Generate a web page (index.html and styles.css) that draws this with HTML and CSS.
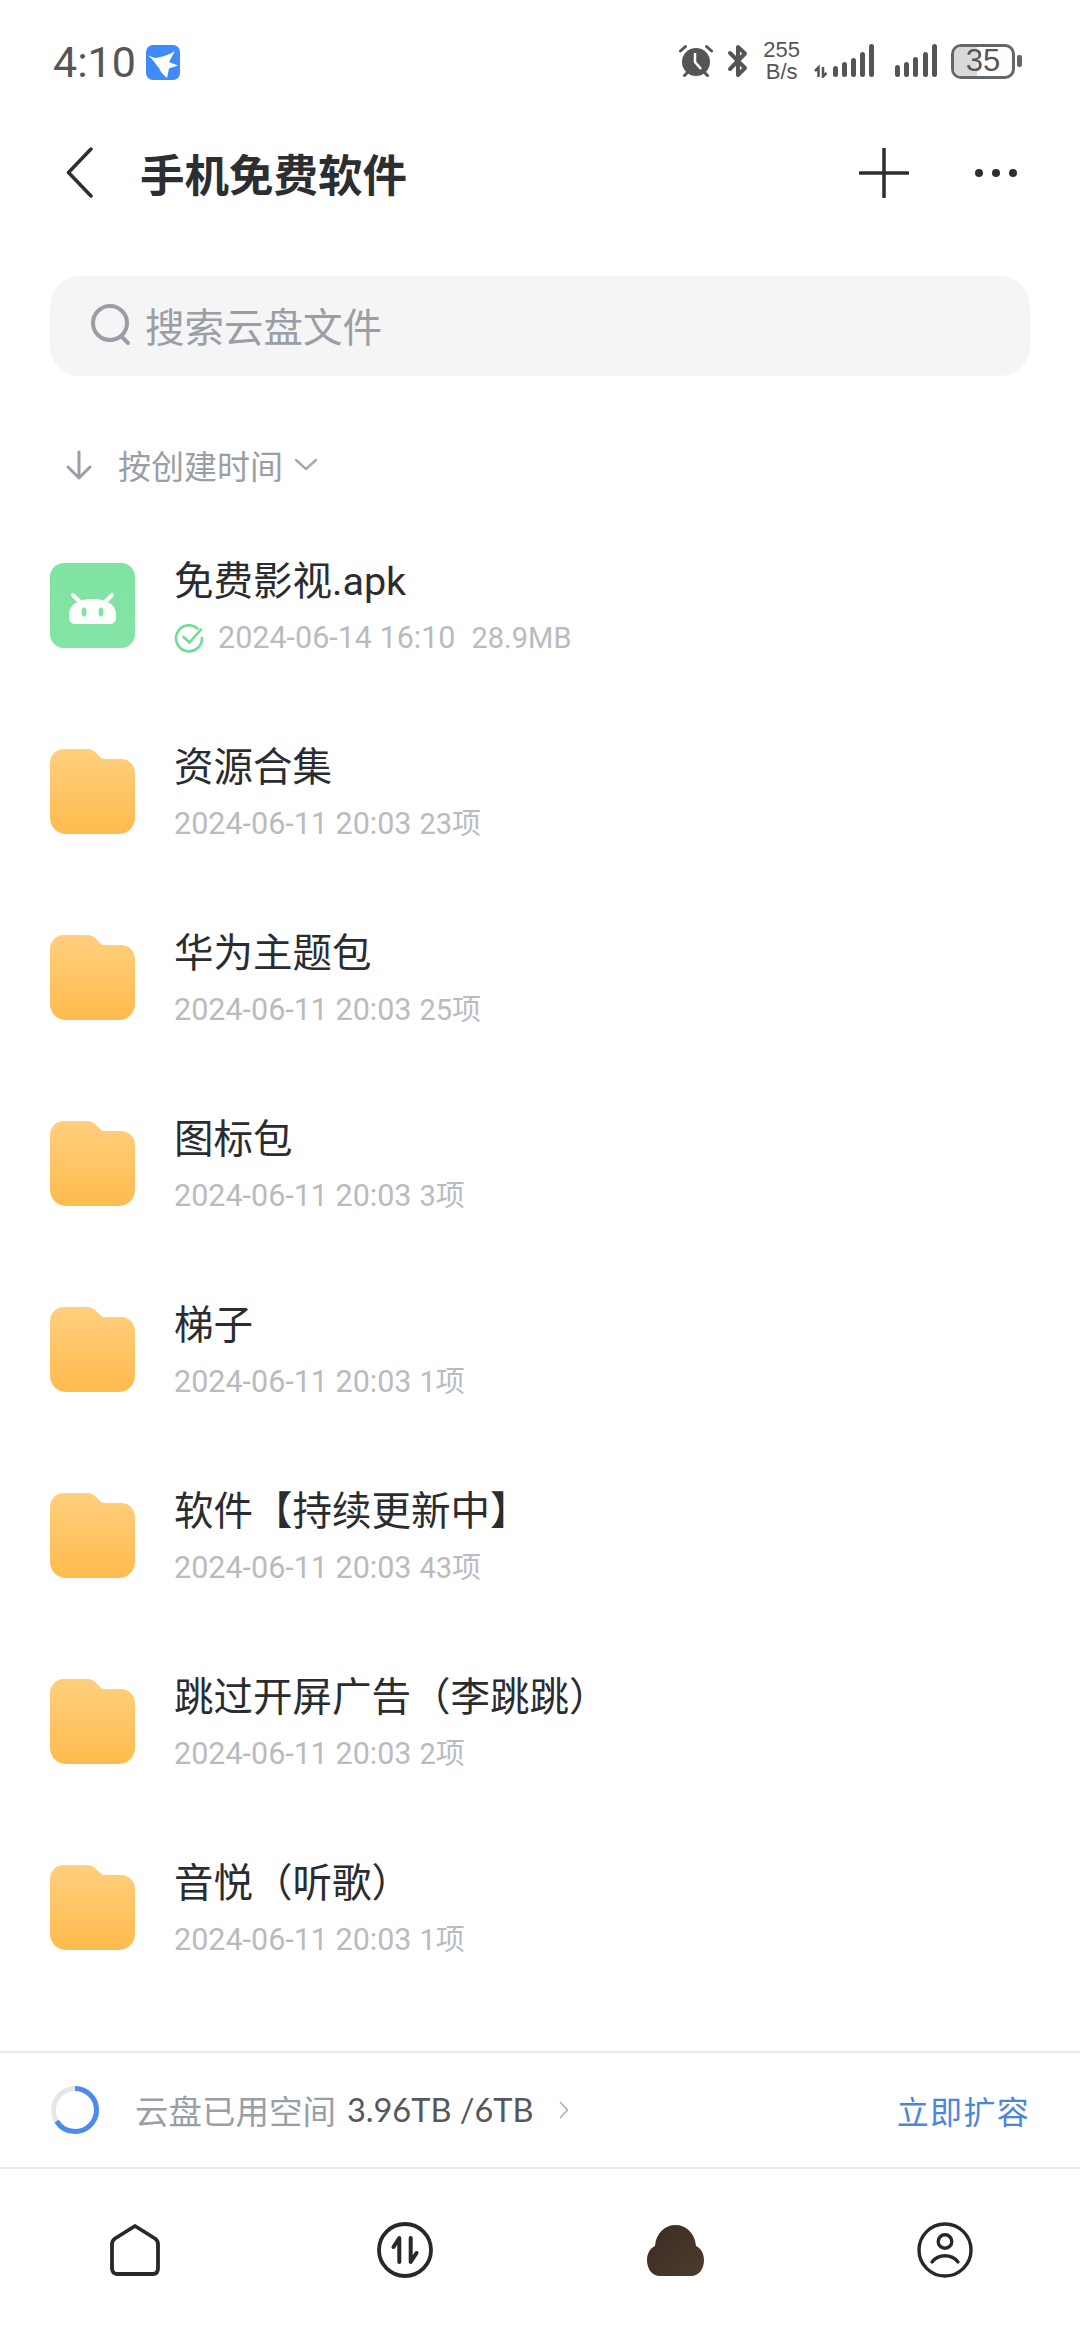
FILE: index.html
```html
<!DOCTYPE html>
<html lang="zh">
<head>
<meta charset="utf-8">
<title>手机免费软件</title>
<link rel="stylesheet" href="styles.css">
</head>
<body>
<div class="app">
  <svg width="0" height="0" class="defs">
    <defs>
      <linearGradient id="fg" x1="0" y1="0" x2="0" y2="1"><stop offset="0" stop-color="#ffcf7e"/><stop offset="1" stop-color="#ffbb4d"/></linearGradient>
      <linearGradient id="ag" x1="0" y1="0" x2="0" y2="1"><stop offset="0" stop-color="#7fe3a1"/><stop offset="1" stop-color="#84e4a5"/></linearGradient>
      <linearGradient id="cg" x1="0" y1="0" x2="1" y2="1"><stop offset="0" stop-color="#392c22"/><stop offset="1" stop-color="#4c3c2e"/></linearGradient>
      <symbol id="folder" viewBox="0 0 84 84"><path d="M14 0H36C41 0 43 1.500 46 4.500L50 8.500C51.500 10 53 10 55 10H70C78 10 84 16 84 24V68C84 77 77 84 68 84H16C7 84 0 77 0 68V14C0 6 6 0 14 0Z" fill="url(#fg)"/></symbol>
    </defs>
  </svg>

  <header class="status">
    <div class="status-left">
      <span class="clock">4:10</span>
      <svg class="bird" width="34" height="35" viewBox="0 0 34 35"><rect width="34" height="35" rx="7" fill="#3f8bfa"/><path d="M2 10.500L9 13C15 12.500 23 10 29 6L23 17L32 20.500L23 23.500L21 33C17 30 14 26 13 23C10 20 8 15 2 10.500Z" fill="#fff"/></svg>
    </div>
    <div class="status-right">
      <svg width="34" height="34" viewBox="0 0 34 34"><circle cx="17" cy="18" r="14" fill="#555"/><path d="M16 9V18L22 25" fill="none" stroke="#fff" stroke-width="2.500"/><path d="M1.500 7L6.500 2.500M27.500 2.500L32.500 7M5.500 31.500L8 29M28.500 31.500L26 29" stroke="#555" stroke-width="3" stroke-linecap="round"/></svg>
      <svg width="22" height="34" viewBox="0 0 22 34"><path d="M3 9L18 24L11 31V3L18 9.500L3 25" fill="none" stroke="#555" stroke-width="4" stroke-linejoin="round" stroke-linecap="round"/></svg>
      <div class="speed"><span>255</span><span>B/s</span></div>
      <svg class="sig1" width="60" height="34" viewBox="0 0 60 34"><path d="M1 27L4.500 23.500V33M9 23V32.500L12.500 29" fill="none" stroke="#555" stroke-width="2.500"/><g fill="#555"><rect x="19" y="22" width="5" height="11" rx="2.500"/><rect x="28" y="18" width="5" height="15" rx="2.500"/><rect x="37" y="14" width="5" height="19" rx="2.500"/><rect x="46" y="8" width="5" height="25" rx="2.500"/><rect x="55" y="0" width="5" height="33" rx="2.500"/></g></svg>
      <svg width="42" height="34" viewBox="0 0 42 34"><g fill="#555"><rect x="0" y="21" width="5" height="12" rx="2.500"/><rect x="9" y="18" width="5" height="15" rx="2.500"/><rect x="18" y="13" width="5" height="20" rx="2.500"/><rect x="28" y="8" width="5" height="25" rx="2.500"/><rect x="37" y="0" width="5" height="33" rx="2.500"/></g></svg>
      <div class="battery"><div class="batt-body"><div class="batt-fill"></div><span class="batt-num">35</span></div><div class="batt-tip"></div></div>
    </div>
  </header>

  <nav class="topbar">
    <div class="topbar-left">
      <svg class="back" width="28" height="52" viewBox="0 0 28 52"><path d="M25 2L2.500 25.500L25 49" fill="none" stroke="#2d2e31" stroke-width="3.500" stroke-linecap="round" stroke-linejoin="round"/></svg>
      <h1 class="title">手机免费软件</h1>
    </div>
    <div class="topbar-right">
      <svg width="50" height="50" viewBox="0 0 50 50"><path d="M25 1V49M1 25H49" stroke="#2d2e31" stroke-width="3.500" stroke-linecap="round"/></svg>
      <svg width="44" height="10" viewBox="0 0 44 10"><circle cx="5" cy="5" r="4" fill="#2d2e31"/><circle cx="22" cy="5" r="4" fill="#2d2e31"/><circle cx="39" cy="5" r="4" fill="#2d2e31"/></svg>
    </div>
  </nav>

  <div class="search">
    <svg width="40" height="42" viewBox="0 0 40 42"><circle cx="19" cy="19" r="17" fill="none" stroke="#9a9ea6" stroke-width="4"/><path d="M32 34L37 39" stroke="#9a9ea6" stroke-width="4" stroke-linecap="round"/></svg>
    <span class="search-text">搜索云盘文件</span>
  </div>

  <div class="sort">
    <svg width="28" height="30" viewBox="0 0 28 30"><path d="M14 2V27M3 17L14 28L25 17" fill="none" stroke="#9a9ea6" stroke-width="3" stroke-linecap="round" stroke-linejoin="round"/></svg>
    <span class="sort-text">按创建时间</span>
    <svg width="24" height="14" viewBox="0 0 24 14"><path d="M2 2L12 11L22 2" fill="none" stroke="#a5a8ae" stroke-width="2.400" stroke-linecap="round" stroke-linejoin="round"/></svg>
  </div>

  <main class="list">
    <div class="row">
      <svg class="file-icon" width="85" height="85" viewBox="0 0 85 85"><rect width="85" height="85" rx="14" fill="url(#ag)"/><path d="M19 52C19 41 29 36 42.500 36C56 36 66 41 66 52V55C66 59 63 61 59 61H26C22 61 19 59 19 55Z" fill="#fff"/><path d="M23 32L29 38M62 32L56 38" stroke="#fff" stroke-width="4" stroke-linecap="round"/><ellipse cx="34" cy="49" rx="2.500" ry="4.500" fill="#7fe3a1"/><ellipse cx="51" cy="49" rx="2.500" ry="4.500" fill="#7fe3a1"/></svg>
      <div class="info">
        <div class="name">免费影视.apk</div>
        <div class="meta"><svg class="ok" width="30" height="30" viewBox="0 0 30 30"><path d="M23.500 5.500A13 13 0 1 0 28 15" fill="none" stroke="#6fdc95" stroke-width="2.600" stroke-linecap="round"/><path d="M9.500 14L15.500 19.500L27 6.500" fill="none" stroke="#6fdc95" stroke-width="2.600" stroke-linecap="round" stroke-linejoin="round"/></svg><span>2024-06-14 16:10</span><span class="size">28.9MB</span></div>
      </div>
    </div>
    <div class="row"><svg class="file-icon" width="85" height="85"><use href="#folder"/></svg><div class="info"><div class="name">资源合集</div><div class="meta"><span>2024-06-11 20:03</span><span class="count">23项</span></div></div></div>
    <div class="row"><svg class="file-icon" width="85" height="85"><use href="#folder"/></svg><div class="info"><div class="name">华为主题包</div><div class="meta"><span>2024-06-11 20:03</span><span class="count">25项</span></div></div></div>
    <div class="row"><svg class="file-icon" width="85" height="85"><use href="#folder"/></svg><div class="info"><div class="name">图标包</div><div class="meta"><span>2024-06-11 20:03</span><span class="count">3项</span></div></div></div>
    <div class="row"><svg class="file-icon" width="85" height="85"><use href="#folder"/></svg><div class="info"><div class="name">梯子</div><div class="meta"><span>2024-06-11 20:03</span><span class="count">1项</span></div></div></div>
    <div class="row"><svg class="file-icon" width="85" height="85"><use href="#folder"/></svg><div class="info"><div class="name">软件【持续更新中】</div><div class="meta"><span>2024-06-11 20:03</span><span class="count">43项</span></div></div></div>
    <div class="row"><svg class="file-icon" width="85" height="85"><use href="#folder"/></svg><div class="info"><div class="name">跳过开屏广告（李跳跳）</div><div class="meta"><span>2024-06-11 20:03</span><span class="count">2项</span></div></div></div>
    <div class="row"><svg class="file-icon" width="85" height="85"><use href="#folder"/></svg><div class="info"><div class="name">音悦（听歌）</div><div class="meta"><span>2024-06-11 20:03</span><span class="count">1项</span></div></div></div>
  </main>

  <section class="storage">
    <div class="storage-left">
      <svg width="50" height="50" viewBox="0 0 50 50"><circle cx="25" cy="25" r="21.500" fill="none" stroke="#e4e6e9" stroke-width="5"/><circle cx="25" cy="25" r="21.500" fill="none" stroke="#4b8bef" stroke-width="5" stroke-dasharray="89 46" transform="rotate(-90 25 25)"/></svg>
      <span class="storage-label">云盘已用空间</span>
      <span class="storage-num">3.96TB /6TB</span>
      <svg class="chev" width="10" height="18" viewBox="0 0 10 18"><path d="M1.500 1.500L8.500 9L1.500 16.500" fill="none" stroke="#a8abb0" stroke-width="1.600" stroke-linecap="round" stroke-linejoin="round"/></svg>
    </div>
    <span class="expand">立即扩容</span>
  </section>

  <footer class="tabs">
    <svg width="50" height="52" viewBox="0 0 50 52"><path d="M25 2L45 14.500C47 16 48 17.500 48 20V44C48 48 46 50 43 50H7C4 50 2 48 2 44V20C2 17.500 3 16 5 14.500Z" fill="none" stroke="#27282b" stroke-width="3.800" stroke-linejoin="round"/></svg>
    <svg width="56" height="56" viewBox="0 0 56 56"><circle cx="28" cy="28" r="26" fill="none" stroke="#27282b" stroke-width="3.800"/><path d="M22.300 40V16L16.500 25M33.700 16V40L39.500 31" fill="none" stroke="#27282b" stroke-width="4" stroke-linejoin="round" stroke-linecap="round"/></svg>
    <svg width="57" height="51" viewBox="0 0 57 51"><path d="M28.500 0C39 0 48 8 49 21C54 23 57 29 57 35C57 44 52 51 44 51H13C5 51 0 44 0 35C0 29 3 23 8 21C9 8 18 0 28.500 0Z" fill="url(#cg)"/></svg>
    <svg width="56" height="56" viewBox="0 0 56 56"><circle cx="28" cy="28" r="26" fill="none" stroke="#27282b" stroke-width="3.400"/><circle cx="28" cy="19.500" r="6.800" fill="none" stroke="#27282b" stroke-width="3.400"/><path d="M15 40C18.500 35.500 23 33.800 28 33.800S37.500 35.500 41 40" fill="none" stroke="#27282b" stroke-width="3.400" stroke-linecap="round"/></svg>
  </footer>
</div>
</body>
</html>
```

FILE: styles.css
```css
* { box-sizing: border-box; margin: 0; padding: 0; }
html, body { width: 1080px; height: 2331px; background: #fff; overflow: hidden; }
body { font-family: "Noto Sans CJK SC", "Noto Sans", sans-serif; }
.app { width: 1080px; height: 2331px; display: flex; flex-direction: column; }
.defs { position: absolute; }
svg { display: block; flex: none; }

.status { height: 122px; padding: 41px 58px 0 53px; display: flex; justify-content: space-between; align-items: flex-start; color: #555; }
.status-left { display: flex; align-items: center; gap: 10px; }
.clock { font-family: Roboto, sans-serif; font-size: 43px; line-height: 42px; color: #555; }
.status-right { display: flex; align-items: center; gap: 14px; height: 40px; }
.speed { display: flex; flex-direction: column; align-items: center; font-family: "Liberation Sans", sans-serif; font-size: 22px; line-height: 22px; color: #555; }
.sig1 { margin-right: 7px; }
.battery { display: flex; align-items: center; gap: 2px; }
.batt-body { position: relative; width: 64px; height: 35px; border: 3px solid #666; border-radius: 10px; overflow: hidden; display: flex; align-items: center; justify-content: center; }
.batt-fill { position: absolute; left: 0; top: 0; bottom: 0; width: 40%; background: #d9d9d9; }
.batt-num { position: relative; font-family: "Liberation Sans", sans-serif; font-size: 31px; line-height: 30px; color: #555; }
.batt-tip { width: 5px; height: 12px; background: #666; border-radius: 2px; }

.topbar { height: 102px; padding: 0 62px 0 66px; display: flex; justify-content: space-between; align-items: center; }
.topbar-left { display: flex; align-items: center; gap: 46px; }
.title { font-size: 44.500px; line-height: 56px; font-weight: 700; color: #2d2e31; }
.topbar-right { display: flex; align-items: center; gap: 65px; }

.search { margin: 52px 50px 0; height: 100px; background: #f5f5f6; border-radius: 30px; display: flex; align-items: center; gap: 14px; padding: 0 0 3px 41px; }
.search-text { font-size: 39.500px; line-height: 56px; color: #9a9ea6; }

.sort { margin: 67px 0 0 65px; height: 44px; display: flex; align-items: center; color: #9a9ea6; }
.sort-text { font-size: 33px; line-height: 44px; margin: 0 11px 0 25px; }

.list { margin-top: 76px; padding: 0 50px; flex: 1; display: flex; flex-direction: column; }
.row { height: 186px; display: flex; align-items: flex-start; gap: 39px; }
.info { margin-top: -7px; }
.name { font-family: Roboto, "Noto Sans CJK SC", sans-serif; font-size: 39.500px; line-height: 52px; color: #2b2c2f; }
.meta { display: flex; align-items: center; margin-top: 11px; font-family: Roboto, "Noto Sans CJK SC", sans-serif; font-size: 30.500px; line-height: 38px; color: #b9bbc0; }
.ok { margin-right: 14px; }
.size { margin-left: 16px; font-size: 29px; }
.count { margin-left: 8px; font-size: 29px; }

.storage { height: 118px; border-top: 2px solid #e9eaeb; border-bottom: 2px solid #e9eaeb; padding: 0 50px; display: flex; align-items: center; justify-content: space-between; }
.storage-left { display: flex; align-items: center; }
.storage-label { font-size: 33.500px; line-height: 44px; color: #9a9ea6; margin-left: 35px; }
.storage-num { font-family: Lato, sans-serif; font-size: 32.500px; line-height: 44px; color: #55575b; margin-left: 11px; }
.chev { margin-left: 26px; }
.expand { font-size: 32px; line-height: 44px; color: #4a86e0; letter-spacing: 1.300px; }

.tabs { height: 162px; padding: 53px 0 0; display: grid; grid-template-columns: repeat(4, 1fr); grid-template-rows: 56px; justify-items: center; align-items: center; }
```
